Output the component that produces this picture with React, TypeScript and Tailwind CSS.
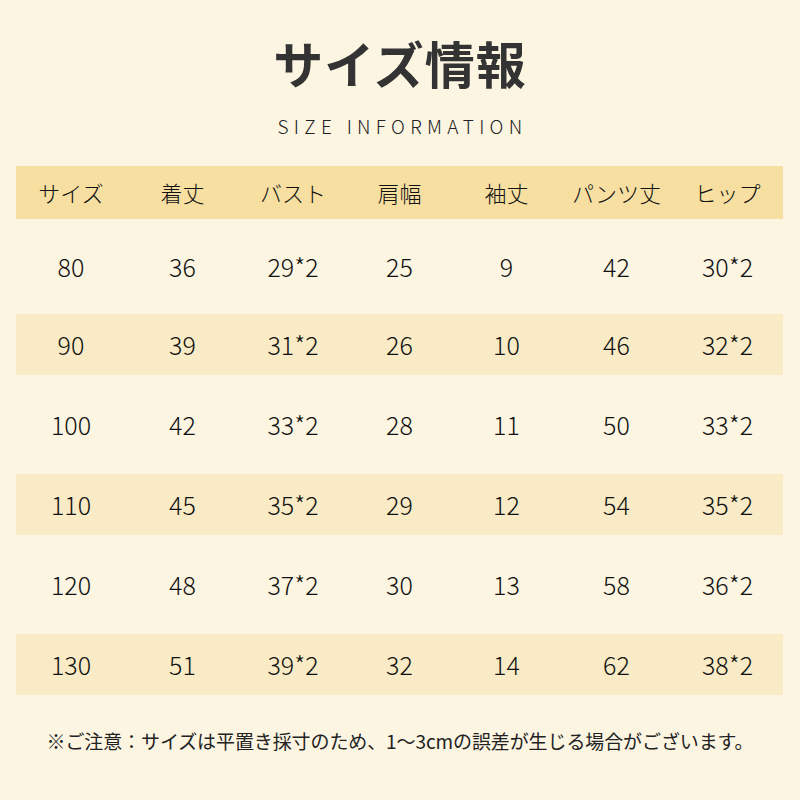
import React from "react"

const headers = ["サイズ", "着丈", "バスト", "肩幅", "袖丈", "パンツ丈", "ヒップ"]

const rows = [
  ["80", "36", "29*2", "25", "9", "42", "30*2"],
  ["90", "39", "31*2", "26", "10", "46", "32*2"],
  ["100", "42", "33*2", "28", "11", "50", "33*2"],
  ["110", "45", "35*2", "29", "12", "54", "35*2"],
  ["120", "48", "37*2", "30", "13", "58", "36*2"],
  ["130", "51", "39*2", "32", "14", "62", "38*2"]
]

const cols = "grid grid-cols-[110px_113px_108px_105px_109px_111px_111px]"

export default function App() {
  return (
    <div
      className="w-[800px] h-[800px] bg-[#fcf5e2] text-[#111] overflow-hidden"
      style={{ fontFamily: '"Noto Sans CJK JP", "Noto Sans", sans-serif' }}
    >
      <div className="flex flex-col items-center pt-[33px]">
        <h1 className="text-[50px] leading-[58px] font-bold text-[#333] tracking-[1px]">サイズ情報</h1>
        <p className="mt-[22px] text-[19px] leading-[26px] tracking-[5.3px] font-light text-[#222] pl-[5px]">
          SIZE INFORMATION
        </p>
      </div>

      <div className="ml-[16px] mt-[27px] w-[767px]">
        <div className={`${cols} h-[53px] items-center bg-[#f7dfa2] text-[22px] font-light`}>
          {headers.map((h) => (
            <div key={h} className="text-center">
              {h}
            </div>
          ))}
        </div>
        {rows.map((r, i) => (
          <div
            key={r[0]}
            className={`${cols} items-center text-[25px] font-light ${
              i % 2 === 1 ? "h-[61px] bg-[#f8ebc5]" : i === 0 ? "h-[95px]" : "h-[99px]"
            }`}
          >
            {r.map((c, j) => (
              <div key={j} className="text-center">
                {c}
              </div>
            ))}
          </div>
        ))}
      </div>

      <p className="mt-[34px] text-center text-[19px] leading-[24px] text-[#222] tracking-[-0.1px]">
        ※ご注意：サイズは平置き採寸のため、1〜3cmの誤差が生じる場合がございます。
      </p>
    </div>
  )
}
